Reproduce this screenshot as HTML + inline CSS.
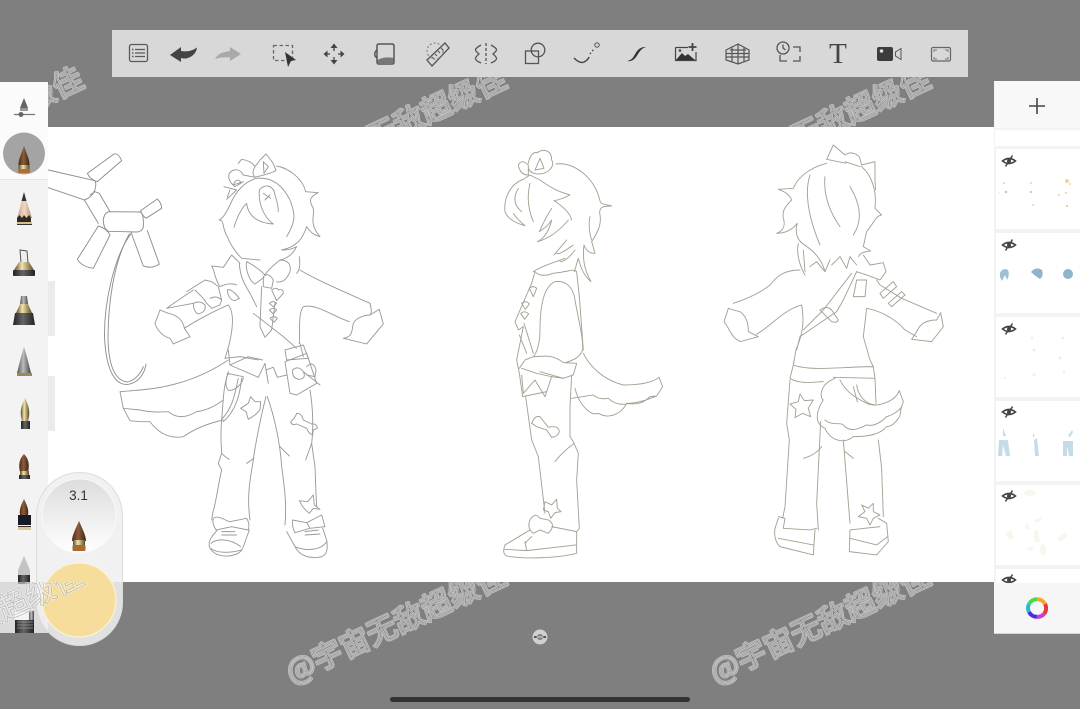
<!DOCTYPE html>
<html><head><meta charset="utf-8">
<style>
html,body{margin:0;padding:0;background:#7f7f7f;width:1080px;height:709px;overflow:hidden}
svg{display:block;filter:blur(.35px)}
.l path{fill:none;stroke-linecap:round;stroke-linejoin:round}
</style></head><body>
<svg width="1080" height="709" viewBox="0 0 1080 709" xmlns="http://www.w3.org/2000/svg">
<defs>
<clipPath id="wm"><rect x="48" y="0" width="64" height="127"/><rect x="112" y="77" width="883" height="50"/><rect x="0" y="582" width="1080" height="127"/></clipPath>
<linearGradient id="wood" x1="0" x2="1" y1="0" y2="0"><stop offset="0" stop-color="#4a2c18"/><stop offset=".45" stop-color="#8d5c3a"/><stop offset="1" stop-color="#3c2415"/></linearGradient>
<linearGradient id="gold" x1="0" x2="1" y1="0" y2="0"><stop offset="0" stop-color="#5c4a20"/><stop offset=".4" stop-color="#f1e3b0"/><stop offset="1" stop-color="#5c4a20"/></linearGradient>
<linearGradient id="steel" x1="0" x2="1" y1="0" y2="0"><stop offset="0" stop-color="#555"/><stop offset=".45" stop-color="#bbb"/><stop offset="1" stop-color="#444"/></linearGradient>
<linearGradient id="dark" x1="0" x2="1" y1="0" y2="0"><stop offset="0" stop-color="#222"/><stop offset=".45" stop-color="#666"/><stop offset="1" stop-color="#222"/></linearGradient>
<linearGradient id="skin" x1="0" x2="1" y1="0" y2="0"><stop offset="0" stop-color="#c9a48c"/><stop offset=".5" stop-color="#f4d7c2"/><stop offset="1" stop-color="#b78f78"/></linearGradient>
<linearGradient id="puck" x1="0" x2="0" y1="0" y2="1"><stop offset="0" stop-color="#dcdcdd"/><stop offset="1" stop-color="#fff"/></linearGradient>
<g id="eye"><path d="M-6.5,0 Q0,-5 6.5,0 Q0,5 -6.5,0Z" fill="none" stroke="#444" stroke-width="1.6"/><circle r="2" fill="#444"/><path d="M-3.5,5.5 L3.5,-5.5" stroke="#444" stroke-width="1.5"/></g>
</defs>
<rect width="1080" height="709" fill="#7f7f7f"/>
<rect x="0" y="127" width="1080" height="455" fill="#fff"/>

<!-- balloon dog -->
<g class="l" transform="translate(40 140) scale(.3333)" stroke="#8e8e8e" stroke-width="2.8">
<path d="M25,90 L165,122 C172,135 165,170 133,180 L25,143"/>
<path d="M142,100 L222,42 Q235,38 245,62 L172,125 Q150,118 142,100Z"/>
<path d="M133,180 L175,250 M165,155 L178,160 L210,215 M150,165 L165,155"/>
<path d="M205,215 L300,216 Q312,220 310,262 Q305,276 290,276 L205,274 Q190,265 190,240 Q192,220 205,215Z"/>
<path d="M302,212 L352,177 Q365,190 365,205 L318,235 Q305,225 302,212Z"/>
<path d="M175,258 L112,358 Q125,380 160,385 L210,285 Q200,265 175,258Z"/>
<path d="M275,282 L310,378 Q335,388 358,372 L322,272"/>
<path d="M275,278 C220,350 190,500 194,600 C200,700 230,738 265,733 C295,728 315,700 318,672"/>
<path d="M268,282 C218,370 205,500 204,590 C205,680 225,722 262,726 C285,722 302,700 310,680"/>
</g>

<!-- figure 1 upper -->
<g class="l" transform="translate(140 140) scale(.3333)" stroke="#9a9a9a" stroke-width="2.8">
<path d="M410,78 C450,85 490,120 497,155"/>
<path d="M345,80 L360,60 L378,42 C388,55 400,65 408,92 C395,100 370,105 345,112 C335,100 340,90 345,80Z M370,65 L385,80 L372,100Z"/>
<path d="M295,70 L305,58 C320,60 335,65 345,80 M268,100 C280,85 300,85 310,105 L345,112 M268,100 C262,115 272,130 285,140 L310,125 M280,135 Q290,110 303,127Z"/>
<path d="M252,140 L290,150 L260,178 M270,150 L262,172"/>
<path d="M350,115 C310,125 285,160 270,195 C260,215 250,235 237,240 C255,240 245,265 262,290 C270,310 285,335 305,355 L360,360"/>
<path d="M282,262 C290,235 300,210 320,190 C325,230 355,250 400,252 C370,230 355,190 358,150 C375,130 400,135 405,165 C410,180 415,200 415,215 M370,160 L392,175 M375,180 L390,165"/>
<path d="M350,115 C400,110 430,140 450,180 C465,220 470,240 440,290"/>
<path d="M497,155 L535,158 C510,170 505,180 520,205 C525,225 505,250 540,290 C520,285 510,275 500,260 C490,290 475,320 425,330 C450,330 460,325 470,320 C460,340 445,355 420,360"/>
<path d="M320,365 C340,375 355,385 375,405 C380,395 395,380 420,360 C440,360 455,370 450,395 C440,420 425,430 410,425 M320,365 C315,390 330,425 345,432 L372,412"/>
<path d="M478,350 C480,370 482,385 470,400 M298,370 C300,400 305,420 330,460 L350,500"/>
<path d="M480,390 C520,415 600,450 690,490 C695,505 695,520 690,525"/>
<path d="M640,550 C650,530 680,525 690,525 L718,508 L730,552 L680,612 L610,595 C640,590 635,570 640,550Z"/>
<path d="M628,545 C580,530 530,490 490,500 C475,520 480,560 478,610 M480,610 L490,650"/>
<path d="M215,378 L250,382 L275,345 L300,370 M215,378 C225,395 225,420 240,440 C260,430 280,430 290,435 M262,450 Q275,445 298,475 L285,482 Q265,480 262,450Z"/>
<path d="M140,455 L195,420 L215,425 L235,440 L245,480 L240,495 L215,505 L200,490 L190,475 L165,450 M160,490 Q180,480 195,495 Q200,515 175,522 Q160,515 160,490Z M210,475 Q230,465 245,480"/>
<path d="M80,505 C100,490 130,470 160,450 M80,505 L160,490 M45,550 L60,510 L85,520 C110,525 130,540 133,565 L150,590 L100,612 L90,595 C70,590 50,570 45,550Z"/>
<path d="M133,565 C170,540 230,510 265,495 C285,520 280,580 255,655"/>
<path d="M365,440 L360,560 L375,592 L395,570 L405,490 M370,410 Q385,395 400,420 L395,445 L370,440Z M395,450 Q410,440 415,450 Q430,445 430,460 L410,482Z M388,490 Q400,480 410,490 L400,500Z M388,510 Q400,500 410,510 L400,522Z M390,535 Q402,525 412,535 L402,547Z"/>
<path d="M340,520 L430,590 L470,625 M435,630 L490,615 L505,655 L440,660Z M255,655 L300,650 L355,660"/>
</g>

<!-- figure 1 lower -->
<g class="l" transform="translate(140 350) scale(.3333)" stroke="#9a9a9a" stroke-width="2.8">
<path d="M265,65 C250,110 250,150 245,210 C240,260 245,300 245,310 L235,340 L245,360 C235,400 230,450 218,490 L215,510 M245,310 C255,320 260,325 268,328"/>
<path d="M378,140 C360,210 345,290 340,330 C330,390 320,440 330,510 M342,325 L320,340"/>
<path d="M382,140 C400,190 420,270 425,350 C435,420 440,470 435,525 M420,290 L448,318"/>
<path d="M510,120 C520,180 520,240 515,280 L525,350 L528,430 L530,470 M515,280 L497,330"/>
<path d="M270,45 L355,82 L375,40 L385,100 L378,60 L400,52 L412,82 L440,75 M270,45 L325,20 L368,30 M265,0 L270,45"/>
<path d="M265,30 C220,60 130,110 0,120 C-30,122 -50,125 -60,125 L-50,175 L0,180 C40,190 70,185 85,185 Q120,215 170,185 Q210,180 250,150 M-50,175 L-30,212 L0,215 L30,215 Q70,270 130,260 Q180,225 250,210"/>
<path d="M265,70 C255,90 255,120 270,122 C300,115 310,90 310,80 M262,70 L310,80 M305,85 C300,130 290,180 250,215 M295,85 C285,130 280,170 245,208"/>
<path d="M435,35 L500,10 L530,100 L470,135 L450,130Z M458,60 Q475,45 490,65 Q500,85 478,88 Q455,85 458,60Z M490,65 L540,105 M500,50 Q520,30 528,60 L525,80 L500,75"/>
<path d="M332,140 L345,155 L362,155 L360,180 L345,195 L325,208 L318,185 L302,175 L325,160Z"/>
<path d="M452,215 Q465,205 470,190 Q485,190 490,210 L515,222 Q530,220 532,235 L520,240 L518,255 Q505,250 500,235 L470,222 Q455,228 452,215Z"/>
<path d="M478,452 L503,455 L520,435 L523,465 L540,478 L520,475 L508,490 L495,478 L488,470Z"/>
<path d="M220,505 Q230,495 260,512 L270,515 L320,505 Q330,520 325,540 L275,530 L228,540 Q215,520 220,505Z M232,540 C215,560 205,570 208,590 C215,610 240,620 265,618 C295,615 305,605 310,590 L328,540 M213,580 C230,565 270,565 302,590 M212,595 C230,610 270,610 305,600 M245,545 L285,545 M245,555 L290,555"/>
<path d="M458,510 L500,518 L545,495 L555,530 L510,535 L465,548Q455,530 458,510Z M500,518 L510,535 M440,545 L465,590 C480,620 510,625 535,622 C560,620 565,600 560,570 L548,535 M465,590 C500,605 545,600 560,575 M495,545 L535,540 M495,555 L540,552"/>
</g>

<!-- figure 2 -->
<g class="l" transform="translate(480 140) scale(.3333)" stroke="#a4a193" stroke-width="2.8">
<path d="M228,72 C280,65 340,110 358,175 C362,195 365,190 395,198 C370,198 355,200 360,225 C365,250 355,275 335,305 L345,340 C330,340 320,335 312,315 C308,350 310,385 333,425 C320,415 305,395 295,355 L283,395"/>
<path d="M180,120 C200,135 230,155 270,165 C250,175 235,180 222,182 C250,200 270,220 275,240 M215,205 C195,235 190,250 178,275 C200,260 205,255 215,240 C210,265 195,295 172,305 C210,295 240,270 265,240"/>
<path d="M130,118 C95,130 70,170 75,215 C85,240 110,250 135,257 C120,245 110,235 100,220 M115,145 C100,170 100,195 125,215 M150,130 C140,170 145,210 160,245 M330,230 C325,250 328,280 335,300"/>
<path d="M115,75 Q125,55 145,75 L145,105 Q120,105 115,75Z M145,70 C150,40 165,35 172,38 C190,25 215,30 215,60 C225,75 210,95 190,100 C170,105 150,100 145,85 M165,90 L180,55 L192,85Z M130,118 L150,105 L180,120"/>
<path d="M222,345 L260,300 M230,340 C240,345 265,325 280,315 M240,365 C255,365 270,350 285,330"/>
<path d="M160,395 C190,375 230,365 255,355 M165,395 C180,410 190,405 205,405 C225,395 240,400 250,395 C265,395 280,385 290,395 M290,395 L298,470 L310,630"/>
<path d="M180,570 C180,500 190,440 225,425 C255,420 280,440 285,480 C295,540 310,590 308,630 C300,650 285,660 255,668 M180,570 C180,610 170,640 160,650 C190,650 215,640 250,668 L290,670 L280,705 L250,715 L180,695"/>
<path d="M165,395 L155,430 L105,545 L115,570 L130,560 L110,660 L118,700 L128,770 L200,755 M160,650 L135,660 L118,685"/>
<path d="M148,445 Q160,435 170,445 L160,470Z M125,490 Q138,480 148,492 L136,508Z M122,520 Q135,510 146,522 L134,538Z M132,550 L160,640 M118,585 L140,640"/>
<path d="M125,685 L170,700 L215,710 L250,715 M125,705 L130,760 L165,720 L195,770 L215,710"/>
<path d="M137,770 L155,900 L175,950 L195,1120 M275,705 L270,800 L270,890 L280,905 L295,940 L290,1020 L298,1165 L290,1175 L215,1160 M225,965 C240,945 255,930 280,912"/>
<path d="M155,850 Q165,825 180,830 L205,862 Q235,855 238,875 Q235,885 225,890 L215,892 L200,870 L170,860Z"/>
<path d="M195,1085 L215,1095 L230,1078 L232,1105 L243,1115 L225,1118 L212,1135 L205,1115 L190,1110Z"/>
<path d="M150,1140 Q165,1115 180,1135 L205,1140 Q230,1155 205,1180 L180,1170 L160,1180 Q140,1165 150,1140Z"/>
<path d="M150,1170 L75,1215 Q65,1240 80,1248 C130,1258 230,1255 290,1240 L290,1175 M73,1228 L140,1232 L288,1215 M140,1232 L135,1205 M155,1190 L135,1210"/>
<path d="M310,640 C330,680 370,720 430,735 C470,735 515,730 537,712 L548,740 L530,768 L510,770 C490,790 470,795 440,790 C425,820 390,840 355,820 C330,830 295,790 285,745 M275,775 L340,765 Q355,780 385,775 Q410,800 450,790 M440,790 Q480,790 530,768"/>
</g>

<!-- figure 3 -->
<g class="l" transform="translate(710 140) scale(.3333)" stroke="#a4a193" stroke-width="2.8">
<path d="M408,70 L350,58 L370,15 L405,45 Q425,30 448,50 L455,75 L495,65 L495,125 L497,150 M405,65 L450,80"/>
<path d="M350,70 C290,85 260,120 250,145 L205,148 C225,155 240,165 245,180 C230,195 215,210 220,235 C225,250 225,270 200,280 C230,280 250,265 262,250 C255,270 260,295 272,305"/>
<path d="M455,80 C490,110 500,160 495,205 L515,225 C500,225 490,250 470,275 L460,320 L482,333 C460,335 450,340 445,350"/>
<path d="M300,105 C285,150 290,220 330,315 M345,110 C340,160 355,210 390,260 M420,140 C450,190 460,240 430,285 M270,305 C290,320 330,340 345,395 L320,365 L300,380 M345,395 L360,360 M365,375 L390,350 L410,385 L420,350 L440,375"/>
<path d="M265,310 C258,340 270,380 285,405 M280,330 L285,395"/>
<path d="M270,390 C220,390 200,410 180,435 C150,460 100,480 70,490 M42,545 L55,505 L70,510 L90,515 C110,530 115,550 115,575 L145,590 L90,605 L75,595 C60,580 55,560 42,545Z"/>
<path d="M140,583 C180,560 220,510 275,495 C285,550 275,590 258,630 L250,675 L240,715 C270,735 320,725 340,725 M250,675 C300,695 400,680 490,680 L495,715 L370,712"/>
<path d="M440,395 L400,480 L380,515 L270,590 L260,630 M425,400 L340,510 L280,570 M330,510 Q350,495 365,510 L385,540 Q380,550 365,545Z"/>
<path d="M460,345 L480,375 L520,368 L528,395 L510,420 L470,405 L440,395 M440,420 L470,420 L465,470 L430,470Z"/>
<path d="M500,420 L510,435 L575,475 L680,520 M470,505 C500,510 550,530 585,570 L620,590 M510,460 L550,425 L560,440 L520,475Z M535,490 L575,455 L585,465 L545,500Z"/>
<path d="M620,575 C630,550 650,540 680,540 L692,518 L700,560 L665,605 L605,598Z M470,505 L460,590 L480,660 L490,680"/>
<path d="M240,720 L230,850 L238,900 L225,1100 L218,1135 M332,845 L320,1090 L325,1170 M400,900 L420,1150 M495,715 L498,790 M505,900 L515,985 L520,1130 M280,955 C300,950 320,940 335,920 M430,955 L405,935"/>
<path d="M375,715 C325,735 330,775 340,780 C320,810 310,850 345,865 C360,900 400,915 430,890 C470,890 510,885 530,860 C550,860 575,830 572,810 L580,785 L568,752 C555,785 500,805 470,790 C440,775 410,760 390,720"/>
<path d="M345,840 C370,860 390,845 400,855 C420,880 450,865 470,855 C490,860 510,850 530,830 C550,825 570,810 575,800 M430,740 L442,785 M440,735 C445,770 470,795 498,795"/>
<path d="M270,762 L283,782 L310,780 L295,805 L302,830 L278,820 L255,833 L258,808 L240,792 L265,785Z"/>
<path d="M490,1090 L490,1115 L510,1125 L490,1135 L480,1155 L470,1135 L445,1130 L465,1115 L455,1095 L475,1105Z"/>
<path d="M205,1130 L225,1135 L220,1165 L300,1170 L320,1165 M195,1165 L205,1135 M195,1165 Q190,1200 210,1220 L310,1245 L315,1170 M205,1195 L310,1215"/>
<path d="M420,1170 L418,1235 L500,1245 L535,1205 L530,1150 L505,1135 M420,1195 L500,1215 L533,1190 M420,1170 L510,1160"/>
</g>

<!-- toolbar -->
<rect x="112" y="30" width="856" height="47" fill="#d8d8d8"/>
<g fill="none" stroke="#5a5a5a" stroke-width="1.3">
<rect x="129.5" y="44.5" width="18" height="17" rx="2"/>
<path d="M135,49.5H145M135,53H145M135,56.5H145"/><path d="M132,49.5h1.5M132,53h1.5M132,56.5h1.5" stroke-width="1.5"/>
<rect x="273.5" y="45.5" width="19" height="15" stroke-dasharray="3.5 2.5" stroke="#666"/>
</g>
<path d="M170,55 L181,47 L181,51 C187,52 192,51 197,47.5 C196,56 187,60 181,58 L181,62Z" fill="#444"/>
<path d="M241,54 L230,47 L230,51 C224,52 218,53 215,59 C220,57 225,57 230,57.5 L230,61Z" fill="#a9a9a9"/>
<path d="M285,52 L296,60 L291,61 L288,67Z" fill="#333"/>
<g fill="#444"><path d="M334,43.5 L337.5,48 H330.5Z M334,64.5 L337.5,60 H330.5Z M323.5,54 L327.5,50.5 V57.5Z M344.5,54 L340.5,50.5 V57.5Z"/><path d="M334,48V51M334,57V60M327,54H330M338,54H341" stroke="#444" stroke-width="1.3"/></g>
<g fill="none" stroke="#555" stroke-width="1.5"><path d="M377,46 Q377,44 379,44 H392 Q394,44 394,46 V62 Q394,64 392,64 H379 Q377,64 377,62Z"/><path d="M377,50 Q374,52 375,56 L377,58"/></g>
<path d="M377.5,60 Q385,56 393.5,58 V62 Q393.5,64 391,64 H380 Q377.5,64 377.5,62Z" fill="#777"/>
<g fill="none" stroke="#555"><path d="M427,60 L445,43 L449,48 L432,66Z" stroke-width="1.3"/><circle cx="435" cy="51" r="8" stroke-dasharray="2 2" stroke="#777"/><path d="M432,57l2,2M435,54l2,2M438,51l2,2M441,48l2,2"/></g>
<g fill="none" stroke="#555" stroke-width="1.3"><path d="M486,43V64" stroke-dasharray="3 2"/><path d="M481,45 C474,49 474,50 479,54 C474,58 474,60 481,63"/><path d="M491,45 C498,49 498,50 493,54 C498,58 498,60 491,63"/></g>
<g fill="none" stroke="#555" stroke-width="1.3"><rect x="525.5" y="51" width="13" height="12.5"/><circle cx="538" cy="50" r="6.8"/></g>
<g fill="none" stroke="#444"><path d="M574,58 Q580,64 584,62 Q588,60 589,57" stroke-width="1.4"/><path d="M590,54 L594,49" stroke-dasharray="1.5 2.2" stroke-width="1.4"/><circle cx="597" cy="45" r="2.2" stroke-width=".9"/></g>
<path d="M627,61 C634,60 634,54 638,50 C641,47 644,47 646,47 C642,48 640,51 638,54 C635,59 632,62 627,61Z" fill="#333"/>
<path d="M675.5,47.5H688M696,52V60.5H675.5V47.5" fill="none" stroke="#444" stroke-width="1.2"/>
<path d="M676,60 L682,53 L685,56 L688,54 L695,60Z" fill="#333"/><circle cx="680" cy="50.5" r="1.3" fill="#444"/>
<path d="M692.5,43V51M688.5,47H696.5" stroke="#444" stroke-width="1.8"/>
<g fill="none" stroke="#555" stroke-width="1.2"><path d="M726,50 L738,44 L749,50 V60 L738,64 L726,60Z"/><path d="M738,44V64M732,47V62M744,47V62M726,53.5L749,53.5M726,57L749,57M730,50H746"/></g>
<g fill="none" stroke="#555" stroke-width="1.3"><circle cx="783" cy="48" r="6"/><path d="M783,44.5V48L785.5,50"/><path d="M793,47H800V52M800,56V61H793M787,61H780V55"/></g>
<text x="838" y="63" text-anchor="middle" font-family="'Liberation Serif',serif" font-size="29" fill="#444">T</text>
<rect x="877" y="47" width="16" height="14" rx="2" fill="#3c3c3c"/><circle cx="881.5" cy="51" r="1.8" fill="#ddd"/>
<path d="M895.5,52 L901,48.5 V59.5 L895.5,56Z" fill="none" stroke="#555"/>
<rect x="931.5" y="47.5" width="19" height="13.5" rx="1.5" fill="none" stroke="#666" stroke-width="1.2"/>
<path d="M934,52V50H937M945,50H948V52M934,57V59H937M945,59H948V57" fill="none" stroke="#777"/>

<!-- left panel -->
<rect x="0" y="82" width="48" height="551" fill="#fff" fill-opacity=".72"/>
<rect x="0" y="127" width="48" height="455" fill="#f3f3f4"/>
<rect x="0" y="82" width="48" height="97" fill="#fbfbfb"/>
<rect x="0" y="179" width="48" height="1" fill="#e4e4e4"/>
<rect x="48" y="281" width="7" height="55" fill="#ebebeb"/>
<rect x="48" y="376" width="7" height="55" fill="#ebebeb"/>
<path d="M24,98 L28,108 H20Z" fill="#666"/><path d="M20,108h8v3h-8z" fill="#999"/>
<path d="M14,114.5H35" stroke="#777" stroke-width="1.2"/><circle cx="21" cy="114.5" r="2.5" fill="#666"/>
<circle cx="24" cy="153.5" r="21" fill="#a4a4a5"/>
<path d="M24,146 C27,155 30,160 29.5,166 H18.5 C18,160 21,155 24,146Z" fill="url(#wood)"/><rect x="18.5" y="165" width="11" height="4" fill="url(#gold)"/><rect x="18" y="169" width="12" height="4" rx="1" fill="#b06f32"/>
<path d="M24,193 L32,218 H17Z" fill="url(#skin)"/><path d="M24,192 L26.5,201 H21.5Z" fill="#333"/><path d="M17,218 l2.5,-3 2.5,3 2,-3 2.5,3 2.5,-3 2,3 V222H17Z" fill="#2f2a25"/><rect x="17" y="222" width="15" height="2" fill="#d4c089"/><rect x="17" y="224" width="15" height="1" fill="#333"/>
<path d="M20,250 L27,251 L28,263 H21Z" fill="#eee" stroke="#555"/><path d="M19,262 H29 L34,270 H14Z" fill="url(#gold)"/><rect x="13" y="270" width="22" height="6" rx="1" fill="url(#dark)"/>
<path d="M21,296 H27 L28,304 H20Z" fill="url(#steel)"/><path d="M20,304 H28 L32,313 H16Z" fill="url(#gold)"/><path d="M15,313 H33 L35,325 H13Z" fill="url(#dark)"/>
<path d="M24,347 L27,357 L31,373 H17 L21,357Z" fill="url(#steel)"/><rect x="17" y="373" width="15" height="3" fill="#9b8a55"/>
<path d="M25,398 C30,408 30,414 28,421 H22 C20,414 20,408 25,398Z" fill="url(#gold)"/><rect x="21" y="421" width="9" height="8" fill="url(#dark)"/>
<path d="M24,454 C28,458 30,464 28,472 H20 C18,464 20,458 24,454Z" fill="url(#wood)"/><rect x="20" y="471" width="9" height="4" fill="url(#gold)"/><rect x="19" y="475" width="11" height="4" fill="url(#dark)"/>
<path d="M24,499 C27,505 29,510 28,515 H20 C19,510 21,505 24,499Z" fill="url(#wood)"/><rect x="18" y="515" width="13" height="10" fill="#151a26"/><rect x="18" y="527" width="13" height="3" fill="#d8c999"/><rect x="18" y="526" width="13" height="1" fill="#3a2c18"/>
<path d="M24,556 L30,570 V577 H18 V570Z" fill="#c4c4c4"/><rect x="18" y="575" width="12" height="7" fill="url(#dark)"/>
<rect x="18" y="582" width="12" height="2" fill="#999"/>
<rect x="15" y="612" width="14" height="8" fill="#f4f4f4"/><rect x="29" y="611" width="5" height="22" fill="url(#steel)"/><rect x="15" y="620" width="19" height="13" fill="url(#dark)"/><path d="M17,622 H33 M17,625 H33 M17,628 H33" stroke="#999" stroke-width=".8"/>

<!-- puck -->
<rect x="36.5" y="472.5" width="86" height="173" rx="43" fill="#efeff0" fill-opacity=".88" stroke="#dcdcde" stroke-width="1"/>
<circle cx="79" cy="516" r="37" fill="url(#puck)" stroke="#f7f7f7"/>
<text x="78.5" y="500" text-anchor="middle" font-family="'Liberation Sans',sans-serif" font-size="13.5" fill="#333">3.1</text>
<path d="M79,521 C83,530 86,536 86,541 H72 C72,536 75,530 79,521Z" fill="url(#wood)"/><rect x="73" y="540" width="12" height="5" fill="url(#gold)"/><rect x="72.5" y="545" width="13" height="6" rx="1" fill="#a76a30"/>
<circle cx="79" cy="600" r="37" fill="#f6dd9c" stroke="#fbf2d8" stroke-width="1.2"/>

<!-- right panel -->
<rect x="994" y="81" width="86" height="552" fill="#f3f3f4"/>
<rect x="995" y="81" width="85" height="47" fill="#f8f8f8"/>
<path d="M1029,106H1045M1037,98V114" stroke="#444" stroke-width="1.6"/>
<rect x="995" y="130" width="85" height="16" fill="#fff"/>
<rect x="996" y="149" width="84" height="80" fill="#fff"/>
<rect x="996" y="233" width="84" height="80" fill="#fff"/>
<rect x="996" y="317" width="84" height="80" fill="#fff"/>
<rect x="996" y="401" width="84" height="80" fill="#fff"/>
<rect x="996" y="485" width="84" height="80" fill="#fff"/>
<rect x="996" y="569" width="84" height="14" fill="#fff"/>
<use href="#eye" x="1009" y="161"/><use href="#eye" x="1009" y="245"/><use href="#eye" x="1009" y="329"/><use href="#eye" x="1009" y="412"/><use href="#eye" x="1009" y="496"/><use href="#eye" x="1009" y="580"/>
<g fill="#ecd59a"><circle cx="1004" cy="183" r="1"/><circle cx="1031" cy="183" r="1"/><circle cx="1067" cy="181" r="2"/><circle cx="1070" cy="184" r="1"/><circle cx="1059" cy="195" r="1"/><circle cx="1066" cy="193" r="1"/><circle cx="1067" cy="206" r="1.2"/><circle cx="1033" cy="205" r="1"/><circle cx="1031" cy="192" r="1" fill="#d9b8a0"/><circle cx="1006" cy="192" r="1.2" fill="#dcb8a8"/><circle cx="999" cy="193" r="1" fill="#eed"/></g>
<g fill="#8db6cd"><path d="M1000,273 Q1003,267 1008,270 Q1010,275 1007,280 L1005,275 L1002,281 L1000,277Z" fill="#9cc0d4"/><path d="M1031,272 Q1036,266 1042,270 Q1044,276 1040,279 Q1035,276 1031,272Z"/><circle cx="1068" cy="274" r="5"/></g>
<g fill="#f3f0e2"><circle cx="1032" cy="338" r="1.5"/><circle cx="1063" cy="338" r="1.5"/><circle cx="1034" cy="350" r="1.5"/><circle cx="1060" cy="358" r="1.5"/><circle cx="1064" cy="372" r="1.5"/><circle cx="1034" cy="375" r="1.5"/><circle cx="1005" cy="378" r="1"/></g>
<g fill="#c5dbe8"><path d="M999,440 H1008 L1010,456 H1006 L1003,445 L1002,456 H998Z"/><path d="M1034,440 L1037,438 L1039,456 H1035Z"/><path d="M1063,441 H1073 V456 H1069 L1067,446 L1067,456 H1063Z"/><path d="M1003,428 L1006,436 L1003,436Z M1033,433 L1035,436 L1033,437Z M1068,436 L1072,430 L1073,432 L1070,437Z"/></g>
<g fill="#f8f7ee"><ellipse cx="1030" cy="493" rx="6" ry="3"/><path d="M1005,533 l6,-3 3,8 -5,2Z"/><path d="M1024,528 l3,-6 3,8Z"/><path d="M1033,520 l10,-3 -5,6Z"/><path d="M1034,530 l4,0 2,12 -6,0Z"/><path d="M1057,538 l8,-6 3,4 -7,6Z"/><path d="M1026,548 l8,-2 -3,5Z"/><ellipse cx="1043" cy="550" rx="3" ry="6"/></g>
<rect x="994" y="583" width="86" height="50" fill="#f6f6f7"/>
<rect x="994" y="633" width="86" height="1" fill="#d4d4d4"/>
<circle cx="1037" cy="608" r="8.8" fill="none" stroke="#fff" stroke-width="4"/>
<g fill="none" stroke-width="4"><path d="M1037,599.2 A8.8,8.8 0 0 1 1045,604" stroke="#f6a623"/><path d="M1045,604 A8.8,8.8 0 0 1 1044,614" stroke="#e63b3b"/><path d="M1044,614 A8.8,8.8 0 0 1 1037,616.8" stroke="#d13bd0"/><path d="M1037,616.8 A8.8,8.8 0 0 1 1029,612" stroke="#4a2ee0"/><path d="M1029,612 A8.8,8.8 0 0 1 1029,604" stroke="#27b7e0"/><path d="M1029,604 A8.8,8.8 0 0 1 1037,599.2" stroke="#4cd84c"/></g>

<!-- rotate handle + home -->
<circle cx="540" cy="637" r="7.5" fill="#d0d0d0"/><path d="M534,637H546" stroke="#555" stroke-width="2"/><circle cx="540" cy="637" r="3" fill="#7f7f7f"/><path d="M536.5,637H543.5" stroke="#ddd" stroke-width="1"/>
<rect x="390" y="697" width="300" height="5" rx="2.5" fill="#333"/>

<!-- watermarks -->
<g clip-path="url(#wm)" font-family="'Noto Sans CJK SC','Liberation Sans',sans-serif" font-size="30" font-weight="500" fill="none">
<g stroke="#fff" stroke-opacity=".55" stroke-width="2.2" stroke-linejoin="round">
<text transform="translate(292 684) rotate(-25)">@宇宙无敌超级佳</text>
<text transform="translate(716 684) rotate(-25)">@宇宙无敌超级佳</text>
<text transform="translate(-131 684) rotate(-25)">@宇宙无敌超级佳</text>
<text transform="translate(292 187) rotate(-25)">@宇宙无敌超级佳</text>
<text transform="translate(716 187) rotate(-25)">@宇宙无敌超级佳</text>
<text transform="translate(-131 187) rotate(-25)">@宇宙无敌超级佳</text>
</g>
<g stroke="#7f7f7f" stroke-opacity=".5" stroke-width=".8">
<text transform="translate(292 684) rotate(-25)">@宇宙无敌超级佳</text>
<text transform="translate(716 684) rotate(-25)">@宇宙无敌超级佳</text>
<text transform="translate(-131 684) rotate(-25)">@宇宙无敌超级佳</text>
<text transform="translate(292 187) rotate(-25)">@宇宙无敌超级佳</text>
<text transform="translate(716 187) rotate(-25)">@宇宙无敌超级佳</text>
<text transform="translate(-131 187) rotate(-25)">@宇宙无敌超级佳</text>
</g>
</g>
</svg>
</body></html>
